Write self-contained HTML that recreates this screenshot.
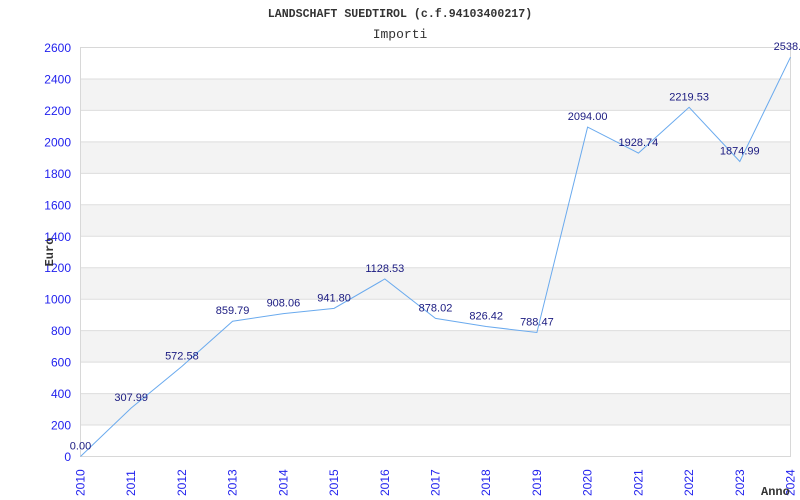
<!DOCTYPE html>
<html><head><meta charset="utf-8"><style>
html,body{margin:0;padding:0;background:#fff;width:800px;height:500px;overflow:hidden}
svg{display:block}
.yl{font-family:"Liberation Sans",sans-serif;font-size:12px;fill:#2222ee}
.dl{font-family:"Liberation Sans",sans-serif;font-size:11px;fill:#1a1a80}
</style></head><body>
<svg width="800" height="500" xmlns="http://www.w3.org/2000/svg">
<g fill="#f3f3f3">
<rect x="80.5" y="393.58" width="710" height="31.46"/>
<rect x="80.5" y="330.65" width="710" height="31.46"/>
<rect x="80.5" y="267.73" width="710" height="31.46"/>
<rect x="80.5" y="204.81" width="710" height="31.46"/>
<rect x="80.5" y="141.88" width="710" height="31.46"/>
<rect x="80.5" y="78.96" width="710" height="31.46"/>
</g>
<g stroke="#ddd">
<line x1="80.5" x2="790.5" y1="425" y2="425"/>
<line x1="80.5" x2="790.5" y1="393.6" y2="393.6"/>
<line x1="80.5" x2="790.5" y1="362.1" y2="362.1"/>
<line x1="80.5" x2="790.5" y1="330.6" y2="330.6"/>
<line x1="80.5" x2="790.5" y1="299.2" y2="299.2"/>
<line x1="80.5" x2="790.5" y1="267.7" y2="267.7"/>
<line x1="80.5" x2="790.5" y1="236.3" y2="236.3"/>
<line x1="80.5" x2="790.5" y1="204.8" y2="204.8"/>
<line x1="80.5" x2="790.5" y1="173.4" y2="173.4"/>
<line x1="80.5" x2="790.5" y1="141.9" y2="141.9"/>
<line x1="80.5" x2="790.5" y1="110.4" y2="110.4"/>
<line x1="80.5" x2="790.5" y1="79" y2="79"/>
</g>
<rect x="80.5" y="47.5" width="710" height="409" fill="none" stroke="#d8d8d8"/>
<g text-anchor="end">
<text class="yl" x="71" y="461">0</text>
<text class="yl" x="71" y="429.5">200</text>
<text class="yl" x="71" y="398">400</text>
<text class="yl" x="71" y="366.6">600</text>
<text class="yl" x="71" y="335.1">800</text>
<text class="yl" x="71" y="303.7">1000</text>
<text class="yl" x="71" y="272.2">1200</text>
<text class="yl" x="71" y="240.8">1400</text>
<text class="yl" x="71" y="209.3">1600</text>
<text class="yl" x="71" y="177.9">1800</text>
<text class="yl" x="71" y="146.4">2000</text>
<text class="yl" x="71" y="114.9">2200</text>
<text class="yl" x="71" y="83.5">2400</text>
<text class="yl" x="71" y="52">2600</text>
</g>
<g>
<text class="yl" transform="translate(84.5,496) rotate(-90)">2010</text>
<text class="yl" transform="translate(135.2,496) rotate(-90)">2011</text>
<text class="yl" transform="translate(185.9,496) rotate(-90)">2012</text>
<text class="yl" transform="translate(236.6,496) rotate(-90)">2013</text>
<text class="yl" transform="translate(287.4,496) rotate(-90)">2014</text>
<text class="yl" transform="translate(338.1,496) rotate(-90)">2015</text>
<text class="yl" transform="translate(388.8,496) rotate(-90)">2016</text>
<text class="yl" transform="translate(439.5,496) rotate(-90)">2017</text>
<text class="yl" transform="translate(490.2,496) rotate(-90)">2018</text>
<text class="yl" transform="translate(540.9,496) rotate(-90)">2019</text>
<text class="yl" transform="translate(591.6,496) rotate(-90)">2020</text>
<text class="yl" transform="translate(642.4,496) rotate(-90)">2021</text>
<text class="yl" transform="translate(693.1,496) rotate(-90)">2022</text>
<text class="yl" transform="translate(743.8,496) rotate(-90)">2023</text>
<text class="yl" transform="translate(794.5,496) rotate(-90)">2024</text>
</g>
<polyline fill="none" stroke="#6aaaee" stroke-width="1" points="80.5,456.5 131.2,408.05 181.9,366.43 232.6,321.25 283.4,313.65 334.1,308.35 384.8,279 435.5,318.38 486.2,326.5 536.9,332.47 587.6,127.1 638.4,153.1 689.1,107.3 739.8,161.5 790.5,57.2"/>
<g text-anchor="middle">
<text class="dl" x="80.5" y="449.5">0.00</text>
<text class="dl" x="131.2" y="401">307.99</text>
<text class="dl" x="181.9" y="359.4">572.58</text>
<text class="dl" x="232.6" y="314.2">859.79</text>
<text class="dl" x="283.4" y="306.6">908.06</text>
<text class="dl" x="334.1" y="301.3">941.80</text>
<text class="dl" x="384.8" y="272">1128.53</text>
<text class="dl" x="435.5" y="311.4">878.02</text>
<text class="dl" x="486.2" y="319.5">826.42</text>
<text class="dl" x="536.9" y="325.5">788.47</text>
<text class="dl" x="587.6" y="120.1">2094.00</text>
<text class="dl" x="638.4" y="146.1">1928.74</text>
<text class="dl" x="689.1" y="100.3">2219.53</text>
<text class="dl" x="739.8" y="154.5">1874.99</text>
<text class="dl" x="790.5" y="50.2">2538.4</text>
</g>
<text x="400" y="17" text-anchor="middle" font-family="Liberation Mono, monospace" font-weight="bold" font-size="11.6" fill="#333">LANDSCHAFT SUEDTIROL (c.f.94103400217)</text>
<text x="400" y="38" text-anchor="middle" font-family="Liberation Mono, monospace" font-size="13" fill="#333">Importi</text>
<text transform="translate(53,252) rotate(-90)" text-anchor="middle" font-family="Liberation Mono, monospace" font-weight="bold" font-size="12" fill="#333">Euro</text>
<text x="761" y="495" font-family="Liberation Mono, monospace" font-weight="bold" font-size="12" fill="#333">Anno</text>
</svg>
</body></html>
